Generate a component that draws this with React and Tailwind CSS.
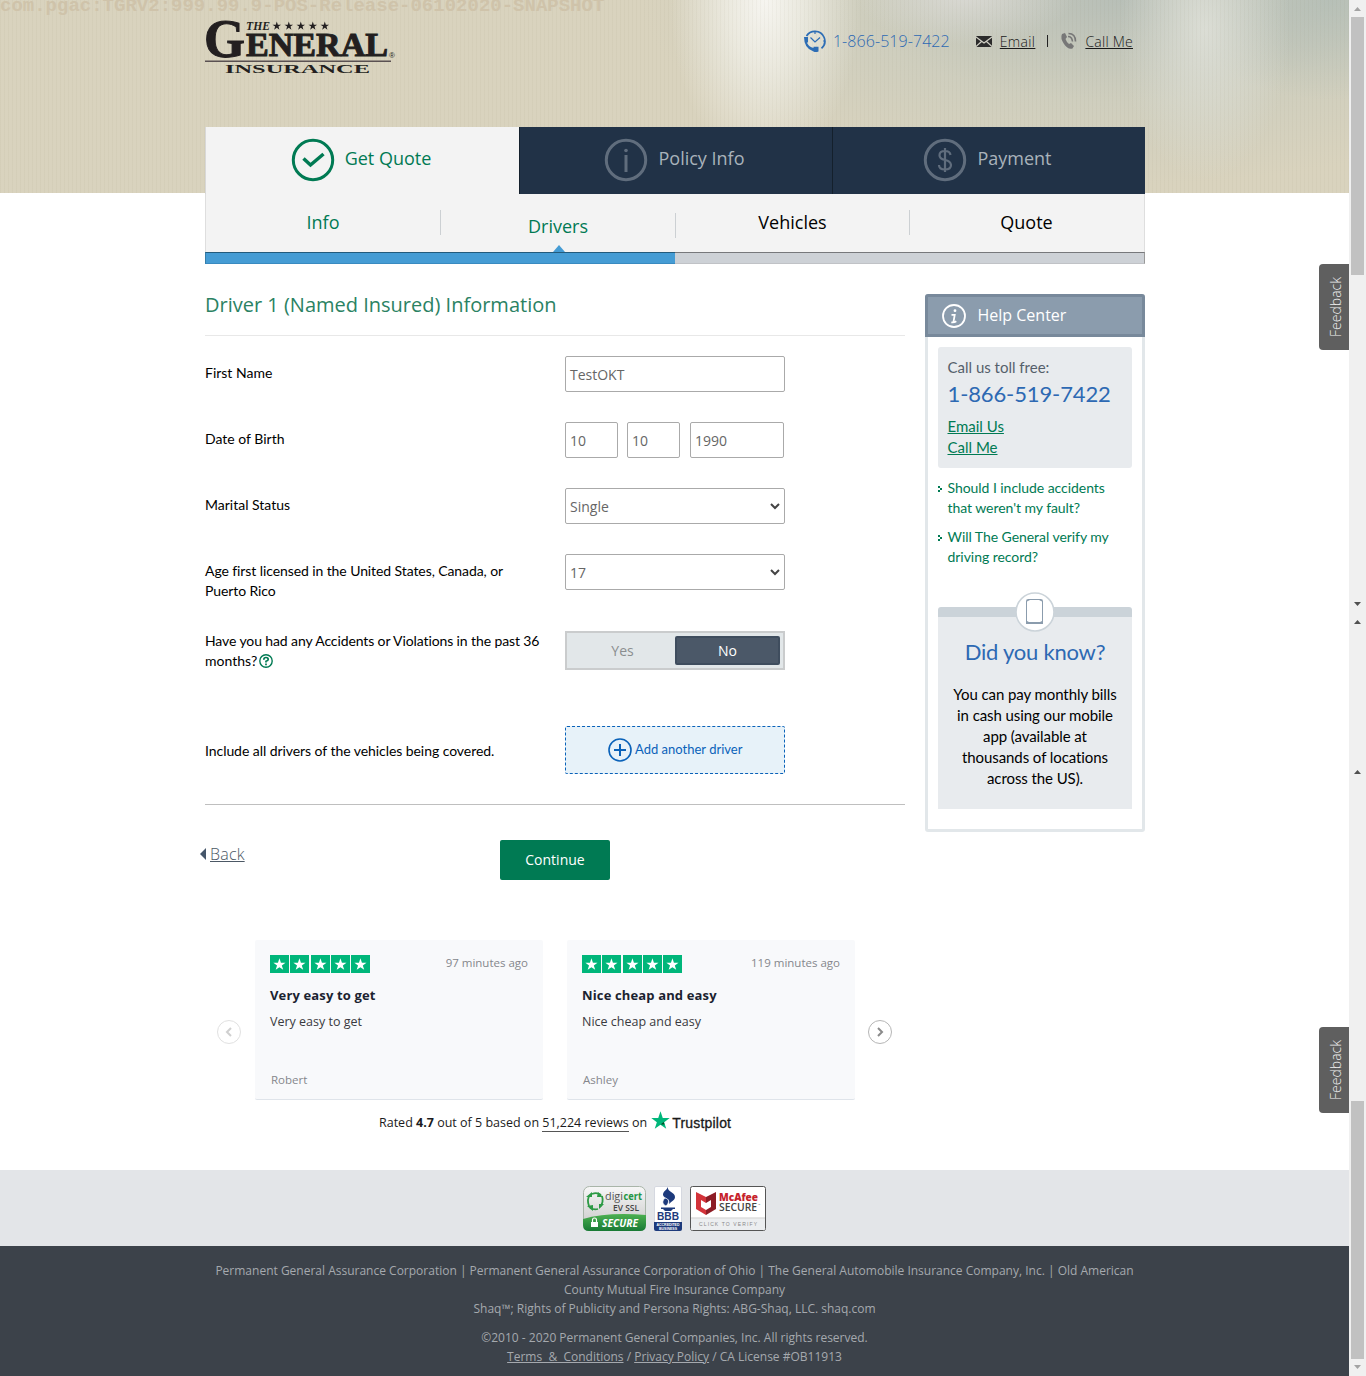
import React from "react";

const STAR = "M12 1.5l2.6 7.6h8l-6.4 4.8 2.4 7.7L12 16.9l-6.6 4.7 2.4-7.7L1.4 9.1h8z";

function Logo() {
  return (
    <svg width="192" height="56" viewBox="0 0 192 56" fill="#231f20" className="block">
      <text x="-1" y="37" fontFamily="Liberation Serif" fontWeight="700" fontSize="55" textLength="41" lengthAdjust="spacingAndGlyphs" stroke="#231f20" strokeWidth="1">G</text>
      <text x="41" y="36" fontFamily="Liberation Serif" fontWeight="700" fontSize="33" textLength="142" lengthAdjust="spacingAndGlyphs" stroke="#231f20" strokeWidth="1">ENERAL</text>
      <text x="41" y="10" fontFamily="Liberation Serif" fontWeight="700" fontStyle="italic" fontSize="12" textLength="24" lengthAdjust="spacingAndGlyphs">THE</text>
      {[67, 79, 91, 103, 115].map((x) => (
        <path key={x} d={STAR} transform={`translate(${x} 1) scale(.4)`} />
      ))}
      <text x="184" y="38" fontFamily="Liberation Sans" fontSize="8">®</text>
      <path d="M0 40.500h186v1.500H0z" fill="#5a5152" />
      <text x="20" y="53" fontFamily="Liberation Serif" fontWeight="700" fontSize="12" textLength="145" lengthAdjust="spacingAndGlyphs">INSURANCE</text>
    </svg>
  );
}

function Tab({ active, label, children }) {
  return (
    <div
      className={
        active
          ? "flex h-[67px] w-[314px] justify-center border-l border-[#d8d8d8] bg-[#f3f3f3] pr-[3px] pt-[11px] text-[#007a53]"
          : "flex h-[67px] w-[313px] justify-center border-l border-[#14202c] bg-[#213247] pr-[3px] pt-[11px] text-[#a9b2bb]"
      }
    >
      {children}
      <span className="ml-[10px] mt-[6px] text-[18px] leading-[28px]">{label}</span>
    </div>
  );
}

function Field({ label, children, className = "h-[66px]" }) {
  return (
    <div className={"flex items-start " + className}>
      <div className="w-[360px] pt-[7px] text-[14px] leading-[20px] text-black">{label}</div>
      {children}
    </div>
  );
}

const BOX = "flex h-[36px] items-center rounded-[2px] border border-[#aaaaaa] bg-white pl-1 pr-1 pt-px font-['Open_Sans',sans-serif] text-[14px] text-[#666]";

function Select({ value }) {
  return (
    <div className={BOX + " w-[220px] justify-between"}>
      <span>{value}</span>
      <svg width="10" height="7" viewBox="0 0 10 7" fill="none" stroke="#444" strokeWidth="2"><path d="M1 1l4 4 4-4" /></svg>
    </div>
  );
}

function Review({ title, ago, name }) {
  return (
    <div className="flex h-[160px] w-[288px] flex-col rounded-[2px] border-b border-[#dfe4ea] bg-[#f8f9fb] px-[15px] pt-[14px] font-['Open_Sans',sans-serif]">
      <div className="flex justify-between">
        <div className="mt-px flex h-[18px] w-[100px] justify-between">
          {[0, 1, 2, 3, 4].map((i) => (
            <div key={i} className="h-[18px] w-[19px] bg-[#00b67a]">
              <svg width="19" height="18" viewBox="0 0 19 18"><path d={STAR} fill="#fff" transform="translate(2.600 2.500) scale(.57)" /></svg>
            </div>
          ))}
        </div>
        <span className="text-[11.500px] leading-[18px] text-[#85878c]">{ago}</span>
      </div>
      <div className="mt-[12px] text-[13px] font-bold leading-[20px] tracking-[0.140px] text-[#1b2330]">{title}</div>
      <div className="mt-[7px] text-[12.500px] leading-[20px] text-[#3a3a40]">{title}</div>
      <div className="ml-px mt-[39px] text-[11.500px] leading-[18px] text-[#85878c]">{name}</div>
    </div>
  );
}

function Arrow({ left }) {
  return (
    <svg width="24" height="24" viewBox="0 0 24 24" fill="none" className={left ? "mt-[80px] opacity-40" : "mt-[80px]"}>
      <circle cx="12" cy="12" r="11.500" stroke="#b5b5b5" />
      <path d={left ? "M14 8l-4 4 4 4" : "M10 8l4 4-4 4"} stroke="#8a8a8a" strokeWidth="2" />
    </svg>
  );
}

function Feedback() {
  return (
    <div className="flex h-[86px] w-[30px] items-center justify-center rounded-l-[4px] bg-[#5f5f5f] pl-[3px] font-['Open_Sans',sans-serif] text-[14px] font-light text-[#f0f0f0]">
      <span className="rotate-180 [writing-mode:vertical-rl]">Feedback</span>
    </div>
  );
}

function Caret({ down, className = "", color }) {
  return (
    <svg width="7" height="4" viewBox="0 0 7 4" className={"mx-auto block " + className}>
      <path d={down ? "M0 0h7L3.500 4z" : "M0 4h7L3.500 0z"} fill={color} />
    </svg>
  );
}

function Scrollbar() {
  return (
    <div className="flex h-[1376px] w-[17px] flex-col bg-[#f0f0f0]">
      <Caret className="mt-[7px]" color="#a3a3a3" />
      <div className="mx-auto mt-[6px] h-[258px] w-[13px] bg-[#c1c1c1]" />
      <Caret down className="mt-[327px]" color="#505050" />
      <Caret className="mt-[14px]" color="#505050" />
      <Caret className="mt-[146px]" color="#505050" />
      <div className="mx-auto mt-[327px] h-[258px] w-[13px] bg-[#c1c1c1]" />
      <Caret down className="mt-[6px]" color="#a3a3a3" />
    </div>
  );
}

function Sidebar() {
  return (
    <aside className="ml-[20px] mt-[30px] h-[538px] w-[220px] rounded-[3px] border-[3px] border-[#e2e7ea] bg-white">
      <div className="-mx-[3px] -mt-[3px] flex h-[43px] items-center rounded-t-[3px] border-[3px] border-[#78899b] bg-[#8b9cad] pl-[13px] font-['Open_Sans',sans-serif] text-[16px] text-white">
        <svg width="26" height="26" viewBox="0 0 26 26" fill="none">
          <circle cx="13" cy="13" r="11" stroke="#fff" strokeWidth="1.800" />
          <circle cx="14" cy="7.700" r="1.400" fill="#fff" />
          <path d="M10.500 11.800h3.200l-1.200 7M10.300 19.300q3 .5 5-1" stroke="#fff" strokeWidth="1.800" />
        </svg>
        <span className="ml-[10.500px] mb-px">Help Center</span>
      </div>
      <div className="mx-[10px] mt-[10px] h-[121px] rounded-[3px] bg-[#e8ebee] pl-[9.500px] pt-[10px]">
        <div className="text-[15px] leading-[20px] text-[#55606b]">Call us toll free:</div>
        <div className="mt-[2px] text-[22px] leading-[30px] tracking-[-0.120px] text-[#2d69b3]">1-866-519-7422</div>
        <div className="mt-[7px] text-[15px] leading-[21px] text-[#007a53] underline">Email Us</div>
        <div className="text-[15px] leading-[21px] text-[#007a53] underline">Call Me</div>
      </div>
      <ul className="ml-[10px] mt-[10px] text-[14px] leading-[20px] tracking-[-0.050px] text-[#007a53]">
        {[["Should I include accidents", "that weren't my fault?"], ["Will The General verify my", "driving record?"]].map(([a, b]) => (
          <li key={a} className="mb-[9px] flex">
            <svg width="9.500" height="20" viewBox="0 0 9.500 20" fill="#007a53" className="shrink-0"><path d="M0 8h2v2H0zM2 10h2v2H2zM0 12h2v2H0z" /></svg>
            <span>{a}<br />{b}</span>
          </li>
        ))}
      </ul>
      <div className="mx-[10px] mt-[25px] flex flex-col items-center">
        <svg width="40" height="40" viewBox="0 0 40 40" fill="none" className="z-10">
          <circle cx="20" cy="20" r="19" fill="#fff" stroke="#cbd3d9" strokeWidth="1.600" />
          <rect x="11.500" y="7.500" width="16" height="24" rx="1" stroke="#8b9cad" />
          <path d="M11 30h17v2H11zM12 29l3 1.500h9l3-1.500v2H12zM12 9.500l3-1.500h9l3 1.500V8H12" fill="#8b9cad" />
        </svg>
        <div className="-mt-[25px] h-[202px] w-[194px] rounded-t-[3px] border-t-[10px] border-[#cbd3d9] bg-[#e8ebee] text-center">
          <div className="mt-[20px] text-[22px] leading-[30px] tracking-[-0.220px] text-[#2d69b3]">Did you know?</div>
          <div className="mt-[17px] text-[15px] leading-[21px] tracking-[-0.080px] text-black">
            You can pay monthly bills<br />in cash using our mobile<br />app (available at<br />thousands of locations<br />across the US).
          </div>
        </div>
      </div>
    </aside>
  );
}

function Badges() {
  return (
    <div className="flex h-[76px] items-start bg-[#e3e5e8] pl-[583px] pt-[16px]">
      <svg width="63" height="45" viewBox="0 0 63 45">
        <defs>
          <linearGradient id="silver" x2="0" y2="1"><stop stopColor="#f7f7f7" /><stop offset="1" stopColor="#c5c5c5" /></linearGradient>
          <linearGradient id="grass" x2="0" y2="1"><stop stopColor="#4cb050" /><stop offset="1" stopColor="#187a35" /></linearGradient>
        </defs>
        <rect x=".5" y=".5" width="62" height="44" rx="6" fill="url(#silver)" stroke="#a9b5a9" />
        <path d="M0 33Q24 26 63 29V39q0 6-6 6H6q-6 0-6-6z" fill="url(#grass)" />
        <g fill="none" stroke="#2d9a45" strokeWidth="1.800">
          <path d="M6 20Q3.500 13 7 9" /><path d="M9 8q5-2 9 1" /><path d="M19 10q2 6-2 11" /><path d="M15 23q-4 1-8-1" />
        </g>
        <path d="M3 11l6-5 0 5zM15 6l5 5-6 0zM21 18l-5 5v-5zM10 25l-6-5 6-1z" fill="#2d9a45" />
        <text x="22" y="14" fontFamily="Open Sans" fontSize="11" fill="#555" textLength="18" lengthAdjust="spacingAndGlyphs">digi<tspan fontWeight="700" fill="#229544" /></text>
        <text x="40.500" y="14" fontFamily="Open Sans" fontWeight="700" fontSize="11" fill="#229544" textLength="18.500" lengthAdjust="spacingAndGlyphs">cert</text>
        <text x="30" y="24.500" fontFamily="Open Sans" fontWeight="600" fontSize="9" fill="#444" textLength="26" lengthAdjust="spacingAndGlyphs">EV SSL</text>
        <rect x="8" y="36" width="7" height="5" fill="#fff" /><path d="M9.500 36v-2a2 2 0 0 1 4 0v2" fill="none" stroke="#fff" strokeWidth="1.200" />
        <text x="19" y="41" fontFamily="Open Sans" fontWeight="700" fontStyle="italic" fontSize="10" fill="#fff" textLength="36" lengthAdjust="spacingAndGlyphs">SECURE</text>
      </svg>
      <svg width="28" height="45" viewBox="0 0 28 45" className="ml-[8px]">
        <rect x=".5" y=".5" width="27" height="44" rx="1.500" fill="#fff" stroke="#d5d8e0" />
        <path d="M0 36h28v7a2 2 0 0 1-2 2H2a2 2 0 0 1-2-2z" fill="#1d3a7c" />
        <path d="M14 1c-1 5 7 5 7 10 0 3-3 4-6 7 2-6-5-5-6-9 0-4 3-4 5-8z" fill="#1d3a7c" />
        <path d="M11 12c4 1 5 4 1 8-4-2-4-5-1-8z" fill="#1d3a7c" stroke="#fff" strokeWidth=".7" />
        <path d="M7 21.500h14v1.500h-2l-2 2h-6l-2-2H7z" fill="#1d3a7c" />
        <text x="3" y="34" fontFamily="Liberation Sans" fontWeight="700" fontSize="11" fill="#1d3a7c" textLength="22" lengthAdjust="spacingAndGlyphs">BBB</text>
        <text x="2.500" y="40" fontFamily="Liberation Sans" fontWeight="700" fontSize="3.800" fill="#fff" textLength="23" lengthAdjust="spacingAndGlyphs">ACCREDITED</text>
        <text x="5" y="43.800" fontFamily="Liberation Sans" fontWeight="700" fontSize="3.600" fill="#fff" textLength="18" lengthAdjust="spacingAndGlyphs">BUSINESS</text>
      </svg>
      <svg width="76" height="45" viewBox="0 0 76 45" className="ml-[8px]">
        <rect x=".5" y=".5" width="75" height="44" rx="2" fill="#fff" stroke="#555" />
        <path d="M1 32.500h74V43q0 1-1 1H2q-1 0-1-1z" fill="#eceef0" /><path d="M1 32h74" stroke="#ccc" />
        <path d="M6 6l10 5v6l-5-3v7l5 3v5l-10-6z" fill="#d3333a" /><path d="M26 6l-10 5v6l5-3v7l-5 3v5l10-6z" fill="#8d1d26" />
        <text x="29" y="14.500" fontFamily="Open Sans" fontWeight="800" fontSize="10.500" fill="#c6222b" textLength="39" lengthAdjust="spacingAndGlyphs">McAfee</text>
        <text x="29" y="25" fontFamily="Open Sans" fontWeight="600" fontSize="10.500" fill="#444" textLength="38" lengthAdjust="spacingAndGlyphs">SECURE</text>
        <text x="68" y="20" fontFamily="Open Sans" fontSize="3" fill="#666">™</text>
        <text x="9" y="40" fontFamily="Liberation Sans" fontSize="5" fill="#888" textLength="58">CLICK TO VERIFY</text>
      </svg>
    </div>
  );
}

export default function App() {
  return (
    <div className="flex h-[1376px] w-[1366px] overflow-hidden bg-white font-['Lato',sans-serif] text-black">
      <div className="relative flex w-[1349px] flex-col">
        <header className="h-[193px] bg-[#d9d3be] bg-[repeating-linear-gradient(90deg,rgba(120,110,70,0.045)_0_1px,transparent_1px_4px),radial-gradient(ellipse_95px_170px_at_765px_0px,rgba(248,247,243,0.95),rgba(244,243,236,0.7)_40%,transparent),radial-gradient(ellipse_110px_50px_at_965px_-5px,rgba(222,221,217,0.8),transparent),radial-gradient(ellipse_85px_150px_at_1205px_30px,rgba(222,224,216,0.9),transparent),radial-gradient(ellipse_150px_100px_at_1330px_0px,rgba(178,189,182,0.8),transparent),radial-gradient(ellipse_480px_185px_at_1120px_0px,rgba(182,190,183,0.95),rgba(200,203,190,0.6)_55%,rgba(214,210,188,0))]">
          <div className="absolute -top-[4px] left-0 whitespace-pre font-['Liberation_Mono',monospace] text-[19px] font-bold leading-[21px] text-[#cfc3aa]">com.pgac:TGRV2:999.99.9-POS-Release-06102020-SNAPSHOT</div>
          <div className="ml-[205px] flex h-[127px] w-[940px] justify-between pr-[12px] pt-[20px]">
            <Logo />
            <div className="flex h-[42px] items-center font-['Open_Sans',sans-serif] text-[14px] font-light text-[#1a1a1a]">
              <svg width="24" height="24" viewBox="0 0 24 24" fill="none" stroke="#2d6db5" strokeWidth="1.700">
                <path d="M3.500 7A9.800 9.800 0 0 1 12 2.300a9.700 9.700 0 0 1 6.500 17" /><path d="M7.500 8.500l4.500 4.500 5-4.500M12 3v2M20 12h2" strokeWidth="1.200" />
                <path d="M1 8h4v5.500H3.800Q6 18 10.500 19v-1.200h5v4.700q-3 1-5 0Q1 19.500 1 8z" fill="#2d6db5" stroke="none" />
              </svg>
              <span className="ml-[6px] text-[16px] tracking-[0.070px] text-[#2d69b3]">1-866-519-7422</span>
              <svg width="16" height="11" viewBox="0 0 16 11" className="ml-[26px]"><rect width="16" height="11" rx="1" fill="#2b2b2b" /><path d="M0 1l8 6 8-6M0 10.500l5.500-5M16 10.500l-5.500-5" fill="none" stroke="#d2d1c6" strokeWidth="1.200" /></svg>
              <span className="ml-[8px] tracking-[0.350px] underline">Email</span>
              <span className="ml-[12px] h-[12px] w-px bg-[#222]" />
              <svg width="17" height="18" viewBox="0 0 17 18" className="ml-[12px]" fill="none" stroke="#777" strokeWidth="1.600">
                <path d="M2 2l3-1 2 4-1.500 2q1 3 3.500 5l2-1 3 3-1.500 2.500Q8 18 4 12 0 6 2 2z" fill="#777" stroke="none" /><path d="M8 4.500q4 0 4.500 5M8.500 1.500q7 0 7 8" />
              </svg>
              <span className="ml-[8px] tracking-[0.250px] underline">Call Me</span>
            </div>
          </div>
          <nav className="ml-[205px] w-[940px] font-['Open_Sans',sans-serif]">
            <div className="flex">
              <Tab active label="Get Quote">
                <svg width="44" height="44" viewBox="0 0 44 44" fill="none" stroke="#007a53"><circle cx="22" cy="22" r="19.700" strokeWidth="3" /><path d="M12.500 20.500l7 6.500 13-11" strokeWidth="3.500" /></svg>
              </Tab>
              <Tab label="Policy Info">
                <svg width="44" height="44" viewBox="0 0 44 44" fill="none" stroke="#606d7d"><circle cx="22" cy="22" r="19.700" strokeWidth="3" /><path d="M22 17v17" strokeWidth="3" /><circle cx="22" cy="12.500" r="1.800" fill="#606d7d" stroke="none" /></svg>
              </Tab>
              <Tab label="Payment">
                <svg width="44" height="44" viewBox="0 0 44 44" fill="none" stroke="#606d7d"><circle cx="22" cy="22" r="19.700" strokeWidth="3" /><path d="M27.500 17q-.5-4-5.500-4-5.500 0-5.500 4.300 0 3.700 5.500 4.700t6 5q0 4.500-6 4.500t-6-4.500M22 10v24" strokeWidth="2.200" /></svg>
              </Tab>
            </div>
            <div className="flex h-[58px] border-x border-[#dedede] bg-[#f3f3f3] text-center text-[18px] leading-[28px]">
              <div className="w-[234px] pt-[14px] text-[#007a53]">Info</div>
              <div className="mt-[16px] h-[25px] w-px bg-[#ccd0d3]" />
              <div className="relative w-[234px] pt-[18px] text-[#007a53]">
                Drivers
                <svg width="12" height="7" viewBox="0 0 12 7" className="absolute bottom-0 left-[112px]"><path d="M0 7l6-7 6 7z" fill="#459cd4" /></svg>
              </div>
              <div className="mt-[19px] h-[25px] w-px bg-[#ccd0d3]" />
              <div className="w-[233px] pt-[14px]">Vehicles</div>
              <div className="mt-[16px] h-[25px] w-px bg-[#ccd0d3]" />
              <div className="w-[233px] pt-[14px]">Quote</div>
            </div>
            <div className="flex h-[12px]">
              <div className="w-[470px] border-b border-l border-t border-b-[#398ac0] border-l-[#357da8] border-t-[#235b7c] bg-[#459cd4]" />
              <div className="w-[470px] border-b border-r border-t border-b-[#c0c2c6] border-r-[#999] border-t-[#77787b] bg-[#cdd1d6]" />
            </div>
          </nav>
        </header>

        <main className="ml-[205px] mt-[71px] flex h-[906px]">
          <div className="w-[700px]">
            <h1 className="h-[72px] border-b border-[#e8e8e8] pt-[26px] font-['Open_Sans',sans-serif] text-[20px] leading-[30px] text-[#2b8263]">Driver 1 (Named Insured) Information</h1>
            <div className="pt-[20px]">
              <Field label="First Name"><div className={BOX + " w-[220px]"}>TestOKT</div></Field>
              <Field label="Date of Birth">
                <div className="flex">
                  <div className={BOX + " w-[53px]"}>10</div>
                  <div className={BOX + " ml-[9px] w-[53px]"}>10</div>
                  <div className={BOX + " ml-[10px] w-[94px]"}>1990</div>
                </div>
              </Field>
              <Field label="Marital Status"><Select value="Single" /></Field>
              <Field className="h-[77px]" label={<span className="tracking-[-0.090px]">Age first licensed in the United States, Canada, or<br />Puerto Rico</span>}><Select value="17" /></Field>
              <Field
                className="-mt-[7px] h-[102px]"
                label={<><span className="tracking-[-0.110px]">Have you had any Accidents or Violations in the past 36</span><br />months?
                  <svg width="14" height="14" viewBox="0 0 14 14" className="ml-[2px] inline align-[-2px]" fill="none" stroke="#007a53"><circle cx="7" cy="7" r="6.200" strokeWidth="1.400" /><path d="M4.800 5.700q0-2.200 2.200-2.200t2.200 1.900Q9.200 6.500 7 7.300v1.200M7 9.600v1.600" strokeWidth="1.700" /></svg></>}
              >
                <div className="mt-[7px] flex h-[39px] w-[220px] border-2 border-[#cacccd] bg-[#e2e7e9] py-[3px] pr-[3px] text-center font-['Open_Sans',sans-serif] text-[14px] leading-[29px]">
                  <div className="w-[108px] pl-[3px] text-[#8b8e90]">Yes</div>
                  <div className="h-[29px] w-[105px] rounded-[2px] border-2 border-[#3f4d5e] bg-[#4b5868] leading-[25px] text-white">No</div>
                </div>
              </Field>
              <Field label={<div className="pt-[8px] tracking-[-0.060px]">Include all drivers of the vehicles being covered.</div>} className="h-[78px]">
                <div className="flex h-[48px] w-[220px] items-center justify-center rounded-[2px] border border-dashed border-[#0a62b9] bg-[#e7f2f9] text-[13px] text-[#0a62b9]">
                  <svg width="24" height="24" viewBox="0 0 24 24" fill="none" stroke="#0a62b9"><circle cx="12" cy="12" r="11" strokeWidth="1.600" /><path d="M12 6v12M6 12h12" strokeWidth="2" /></svg>
                  <span className="ml-[3.500px]">Add another driver</span>
                </div>
              </Field>
            </div>
            <div className="h-px bg-[#bfbfbf]" />
            <div className="mt-[35px] flex h-[40px] font-['Open_Sans',sans-serif]">
              <div className="-ml-[5px] flex h-[28px] w-[300px] items-center text-[16px] text-[#4c5865]">
                <svg width="6" height="12" viewBox="0 0 6 12"><path d="M6 0v12L0 6z" fill="#45566a" /></svg>
                <span className="ml-[4px] font-light tracking-[0.200px] underline">Back</span>
              </div>
              <button className="h-[40px] w-[110px] rounded-[2px] bg-[#007a53] pb-[2px] text-[14px] text-white">Continue</button>
            </div>
            <div className="ml-[12px] mt-[60px] flex">
              <Arrow left />
              <div className="ml-[14px] mr-[13px] flex gap-[24px]">
                <Review title="Very easy to get" ago="97 minutes ago" name="Robert" />
                <Review title="Nice cheap and easy" ago="119 minutes ago" name="Ashley" />
              </div>
              <Arrow />
            </div>
            <div className="mt-[11px] flex h-[25px] items-center pl-[174px] font-['Open_Sans',sans-serif] text-[12.500px] text-[#1b1b21]">
              <span className="whitespace-pre">Rated <b>4.7</b> out of 5 based on <span className="border-b border-[#555]">51,224 reviews</span> on</span>
              <svg width="19" height="19" viewBox="0 0 24 24" className="-mt-[7px] ml-[4px]"><path d={STAR} fill="#00b67a" transform="translate(-1.200 -1.200) scale(1.100)" /><path d="M17 17l-1-3-4 3z" fill="#005128" /></svg>
              <span className="ml-[2px] font-['Liberation_Sans',sans-serif] text-[14px] tracking-[0.200px] text-[#191919] [-webkit-text-stroke:0.300px_#191919]">Trustpilot</span>
            </div>
          </div>
          <Sidebar />
        </main>

        <Badges />
        <footer className="h-[130px] bg-[#3c424a] pt-[15px] text-center font-['Open_Sans',sans-serif] text-[12px] leading-[19px] text-[#a5a9ae]">
          <p>Permanent General Assurance Corporation | Permanent General Assurance Corporation of Ohio | The General Automobile Insurance Company, Inc. | Old American<br />County Mutual Fire Insurance Company<br />Shaq™; Rights of Publicity and Persona Rights: ABG-Shaq, LLC. shaq.com</p>
          <p className="mt-[10px]">©2010 - 2020 Permanent General Companies, Inc. All rights reserved.<br /><span className="whitespace-pre underline">Terms  &amp;  Conditions</span> / <span className="underline">Privacy Policy</span> / CA License #OB11913</p>
        </footer>
        <div className="absolute right-0 top-[264px]"><Feedback /></div>
        <div className="absolute right-0 top-[1027px]"><Feedback /></div>
      </div>
      <Scrollbar />
    </div>
  );
}
